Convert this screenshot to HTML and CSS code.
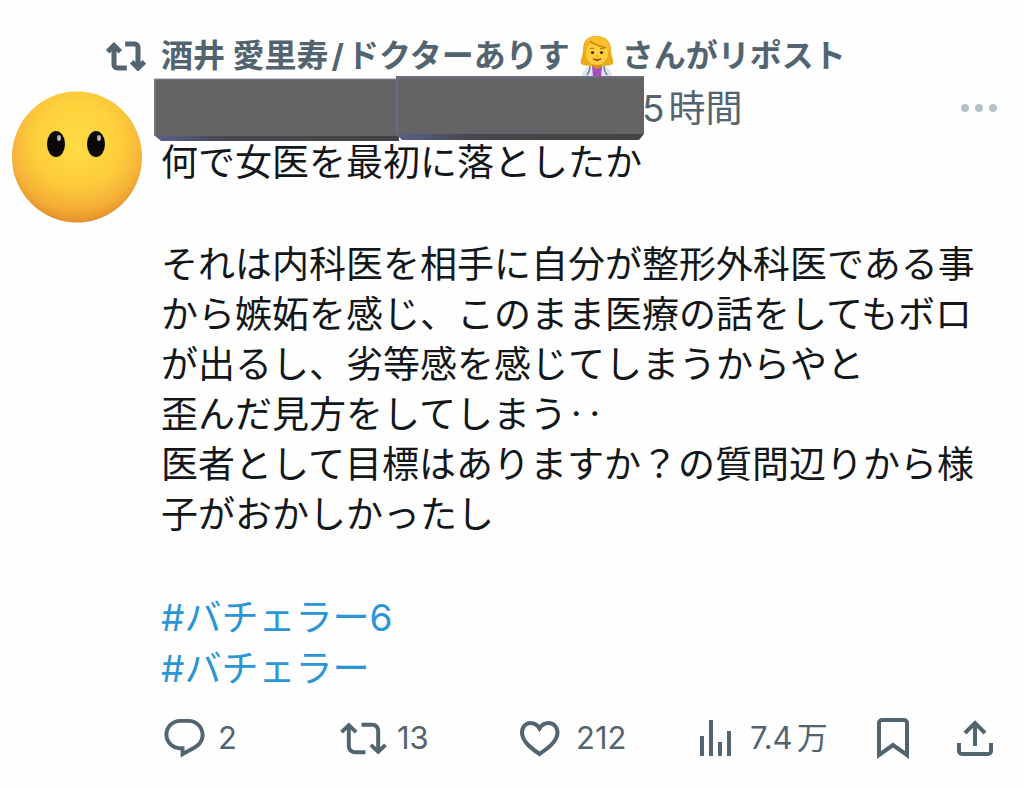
FILE: index.html
```html
<!DOCTYPE html>
<html lang="ja">
<head>
    <meta charset="UTF-8">
    <meta name="viewport" content="width=device-width, initial-scale=1">
    <title>ポスト</title>
    <link rel="stylesheet" href="styles.css">
</head>
<body>
    <article class="post">
        <div class="repost">
            <svg class="repost-icon" viewBox="0 0 24 24" aria-hidden="true">
                <path d="M4.8 16.500V6.6M1 9.4l3.8-3.7 3.8 3.7M4.8 15v2.2a2 2 0 0 0 2 2H12.500M19.200 8V17.400M15.400 15.500l3.800 3.700 3.800-3.700M19.200 9V6.800a2 2 0 0 0-2-2H11.500"/>
            </svg>
            <span>酒井 愛里寿<span class="slash">/</span>ドクターありす</span>
            <svg class="emoji" viewBox="0 0 34 42" role="img" aria-label="女性の医者">
                <path d="M17 1C7 0 3 7 3 15c0 6-3 9-2 14 5 3 27 3 32 0 1-5-2-8-2-14C31 7 26 1 17 1z" fill="#eda91c"/>
                <path d="M2 42c0-7 4-10 10-11h10c6 1 10 4 10 11z" fill="#dfe5ef"/>
                <path d="M12 31h10l-1 11h-8z" fill="#a64cc0"/>
                <path d="M13 26h8v6q-4 4-8 0z" fill="#dc8d18"/>
                <ellipse cx="17" cy="18" rx="11" ry="12" fill="#ffd03a"/>
                <path d="M5 17C6 9 9 6 12 6c3 4 10 6 14 7 2 1 2 3 3 5 2-9-2-16-11-17C9 0 4 6 5 17z" fill="#fbc02d"/>
                <path d="M10 6c4 4 11 5 16 7" fill="none" stroke="#c97c0c" stroke-width="1.500"/>
                <path d="M10 14q2-2 4 0M20 14q2-2 4 0" fill="none" stroke="#a46212" stroke-width="1"/>
                <circle cx="12.500" cy="17.500" r="1.600" fill="#4a2c18"/>
                <circle cx="21.500" cy="17.500" r="1.600" fill="#4a2c18"/>
                <path d="M16 21h2" stroke="#d78d14" stroke-width="1"/>
                <path d="M13 24q4 3 8 0q-4 1-8 0z" fill="#b2382b" stroke="#b2382b" stroke-width="1"/>
                <path d="M10 31q0 5-3 9M24 31q0 5 3 9" fill="none" stroke="#6d7d8e" stroke-width="1.500"/>
            </svg>
            <span>さんがリポスト</span>
        </div>

        <svg class="avatar" viewBox="0 0 130 132" role="img" aria-label="プロフィール画像">
            <defs>
                <radialGradient id="face" cx="50%" cy="42%" r="58%">
                    <stop offset="0" stop-color="#ffdc45"/>
                    <stop offset="0.550" stop-color="#fecf3c"/>
                    <stop offset="0.850" stop-color="#f5b038"/>
                    <stop offset="1" stop-color="#dd8a2a"/>
                </radialGradient>
                <linearGradient id="shine" x1="0" y1="0" x2="0" y2="1">
                    <stop offset="0" stop-color="#ffdf3e" stop-opacity="0.400"/>
                    <stop offset="0.450" stop-color="#ffd83e" stop-opacity="0.100"/>
                    <stop offset="1" stop-color="#ee962c" stop-opacity="0.400"/>
                </linearGradient>
            </defs>
            <ellipse cx="65" cy="66" rx="65" ry="65.500" fill="url(#face)"/>
            <ellipse cx="65" cy="66" rx="65" ry="65.500" fill="url(#shine)"/>
            <ellipse cx="44" cy="53" rx="9" ry="13" fill="#0b0806"/>
            <ellipse cx="84" cy="53" rx="9" ry="13" fill="#0b0806"/>
            <ellipse cx="47" cy="47" rx="2" ry="3" fill="#b9b4b0"/>
            <ellipse cx="87" cy="47" rx="2" ry="3" fill="#b9b4b0"/>
        </svg>

        <div class="content">
            <header class="author">
                <svg class="mask mask-name" viewBox="0 0 245 64" aria-hidden="true">
                    <defs>
                        <linearGradient id="edge">
                            <stop offset="0" stop-color="#5a6090"/>
                            <stop offset="0.300" stop-color="#46464c"/>
                            <stop offset="1" stop-color="#434347"/>
                        </linearGradient>
                    </defs>
                    <path d="M0 1h245v62H7L0 57z" fill="url(#edge)"/>
                    <path d="M0 1h245v57H0z" fill="#636366"/>
                    <path d="M1 58V1h244" fill="none" stroke="#85859a"/>
                </svg>
                <svg class="mask mask-id" viewBox="0 0 248 64" aria-hidden="true">
                    <path d="M0 0h248v58l-5 6H6l-5-5z" fill="url(#edge)"/>
                    <path d="M0 0h248v58H1z" fill="#646467"/>
                    <path d="M1 58V1h247" fill="none" stroke="#77779c"/>
                </svg>
                <time class="time"><span>5</span><span>時間</span></time>
                <button class="more" type="button" aria-label="もっと見る">
                    <svg viewBox="0 0 36 8" aria-hidden="true">
                        <circle cx="4" cy="4" r="4"/>
                        <circle cx="18" cy="4" r="4"/>
                        <circle cx="32" cy="4" r="4"/>
                    </svg>
                </button>
            </header>

            <div class="text">
                <p>何で女医を最初に落としたか</p>
                <p>それは内科医を相手に自分が整形外科医である事から嫉妬を感じ、このまま医療の話をしてもボロが出るし、劣等感を感じてしまうからやと<br>歪んだ見方をしてしまう‥<br>医者として目標はありますか？の質問辺りから様子がおかしかったし</p>
                <p class="tags"><a href="#">#バチェラー6</a><br><a href="#">#バチェラー</a></p>
            </div>

            <div class="actions">
                <button class="action" type="button" aria-label="返信 2">
                    <svg class="icon icon-fill" viewBox="0 0 24 24" aria-hidden="true">
                        <path d="M1.751 10c0-4.420 3.584-8 8.005-8h4.366c4.490 0 8.129 3.640 8.129 8.130 0 2.960-1.607 5.680-4.196 7.110l-8.054 4.460v-3.690h-.067c-4.490.100-8.183-3.510-8.183-8.010zm8.005-6c-3.317 0-6.005 2.690-6.005 6 0 3.370 2.770 6.080 6.138 6.010l.351-.010h1.761v2.300l5.087-2.810c1.951-1.080 3.163-3.130 3.163-5.360 0-3.390-2.744-6.130-6.129-6.130H9.756z"/>
                    </svg>
                    <span>2</span>
                </button>
                <button class="action" type="button" aria-label="リポスト 13">
                    <svg class="icon icon-fill" viewBox="0 0 24 24" aria-hidden="true">
                        <path d="M4.500 3.880l4.432 4.140-1.364 1.460L5.500 7.550V16c0 1.100.896 2 2 2H13v2H7.500c-2.209 0-4-1.790-4-4V7.550L1.432 9.480.068 8.020 4.500 3.880zM16.500 6H11V4h5.500c2.209 0 4 1.790 4 4v8.450l2.068-1.930 1.364 1.460-4.432 4.140-4.432-4.140 1.364-1.460 2.068 1.930V8c0-1.100-.896-2-2-2z"/>
                    </svg>
                    <span>13</span>
                </button>
                <button class="action" type="button" aria-label="いいね 212">
                    <svg class="icon" viewBox="0 0 47 47" aria-hidden="true">
                        <path d="M20.500 39C14 34.500 3 27 3 17.500 3 12 6.800 8 11.500 8c4 0 7 2.200 9 5.500C22.500 10.200 25.500 8 29.500 8c4.700 0 9 4 9 9.500C38.500 27 27 34.500 20.500 39z"/>
                    </svg>
                    <span>212</span>
                </button>
                <button class="action" type="button" aria-label="表示 7.4万">
                    <svg class="icon icon-narrow" viewBox="0 0 42 47" aria-hidden="true">
                        <path d="M4 41V21M13 41V5M22 41V27M31 41V16"/>
                    </svg>
                    <span class="views"><span>7.4</span><span>万</span></span>
                </button>
                <button class="action" type="button" aria-label="ブックマーク">
                    <svg class="icon" viewBox="0 0 47 47" aria-hidden="true">
                        <path d="M2 40V8a3 3 0 0 1 3-3h22a3 3 0 0 1 3 3v32L16 30z"/>
                    </svg>
                </button>
                <button class="action" type="button" aria-label="共有">
                    <svg class="icon" viewBox="0 0 47 47" aria-hidden="true">
                        <path d="M2 28v8a3 3 0 0 0 3 3h26a3 3 0 0 0 3-3v-8M18 31V8M8 18L18 8l10 10"/>
                    </svg>
                </button>
            </div>
        </div>
    </article>
</body>
</html>
```
FILE: styles.css
```css
* {
    box-sizing: border-box;
}

body {
    margin: 0;
    background: #fefefe;
    color: #14171a;
    font-family: "Noto Sans CJK JP", sans-serif;
}

button {
    padding: 0;
    border: 0;
    background: none;
    color: inherit;
    font: inherit;
    cursor: pointer;
}

svg {
    display: block;
    flex-shrink: 0;
}

.post {
    display: grid;
    grid-template-columns: 130px 1fr;
    column-gap: 19px;
    padding: 36px 27px 20px 12px;
}

/* "reposted by" line */
.repost {
    grid-column: 1 / -1;
    display: flex;
    align-items: center;
    height: 40px;
    padding-left: 94px;
    color: #536471;
    font-family: Inter, "Noto Sans CJK JP", sans-serif;
    font-size: 32px;
    font-weight: 700;
    line-height: 36px;
    white-space: nowrap;
}

.repost-icon {
    width: 40px;
    height: 40px;
    margin-right: 15px;
    fill: none;
    stroke: #536471;
    stroke-width: 3;
}

.slash {
    padding: 0 3px;
}

.emoji {
    width: 34px;
    height: 42px;
    margin: 0 8px 0 10px;
}

.avatar {
    width: 130px;
    height: 132px;
    margin-top: 15px;
}

.content {
    min-width: 0;
}

/* the bars hang a little over the first line of the text */
.author {
    display: flex;
    height: 64px;
    margin-bottom: -5px;
    color: #536471;
    font-size: 37px;
    line-height: 66px;
}

.mask {
    height: 64px;
}

.mask-name {
    width: 245px;
    margin: 2px 0 0 -7px;
}

.mask-id {
    width: 248px;
    margin-left: -3px;
}

.time {
    display: flex;
    gap: 4px;
    margin-left: -2px;
    font-family: Inter, "Noto Sans CJK JP", sans-serif;
}

.more {
    align-self: center;
    margin-left: auto;
}

.more svg {
    width: 36px;
    height: 8px;
    fill: #b3c2cb;
}

.text {
    font-size: 37px;
    line-height: 50px;
}

.text p {
    margin: 0 0 52px;
}

.text .tags {
    margin: 55px 0 19px;
    font-family: Inter, "Noto Sans CJK JP", sans-serif;
    line-height: 51px;
}

.tags a {
    color: #2b95d6;
    text-decoration: none;
}

/* reply, repost, like, views, bookmark, share */
.actions {
    display: grid;
    grid-template-columns: repeat(4, 1fr) 80px 40px;
    color: #536471;
    font-family: Inter, "Noto Sans CJK JP", sans-serif;
    font-size: 31px;
    line-height: 50px;
}

.action {
    display: flex;
    align-items: center;
    gap: 10px;
}

.icon {
    width: 47px;
    height: 47px;
    fill: none;
    stroke: #536471;
    stroke-width: 4;
}

.icon-narrow {
    width: 42px;
}

.icon-fill {
    fill: #536471;
    stroke: none;
}

.views {
    display: flex;
    gap: 4px;
}
```
